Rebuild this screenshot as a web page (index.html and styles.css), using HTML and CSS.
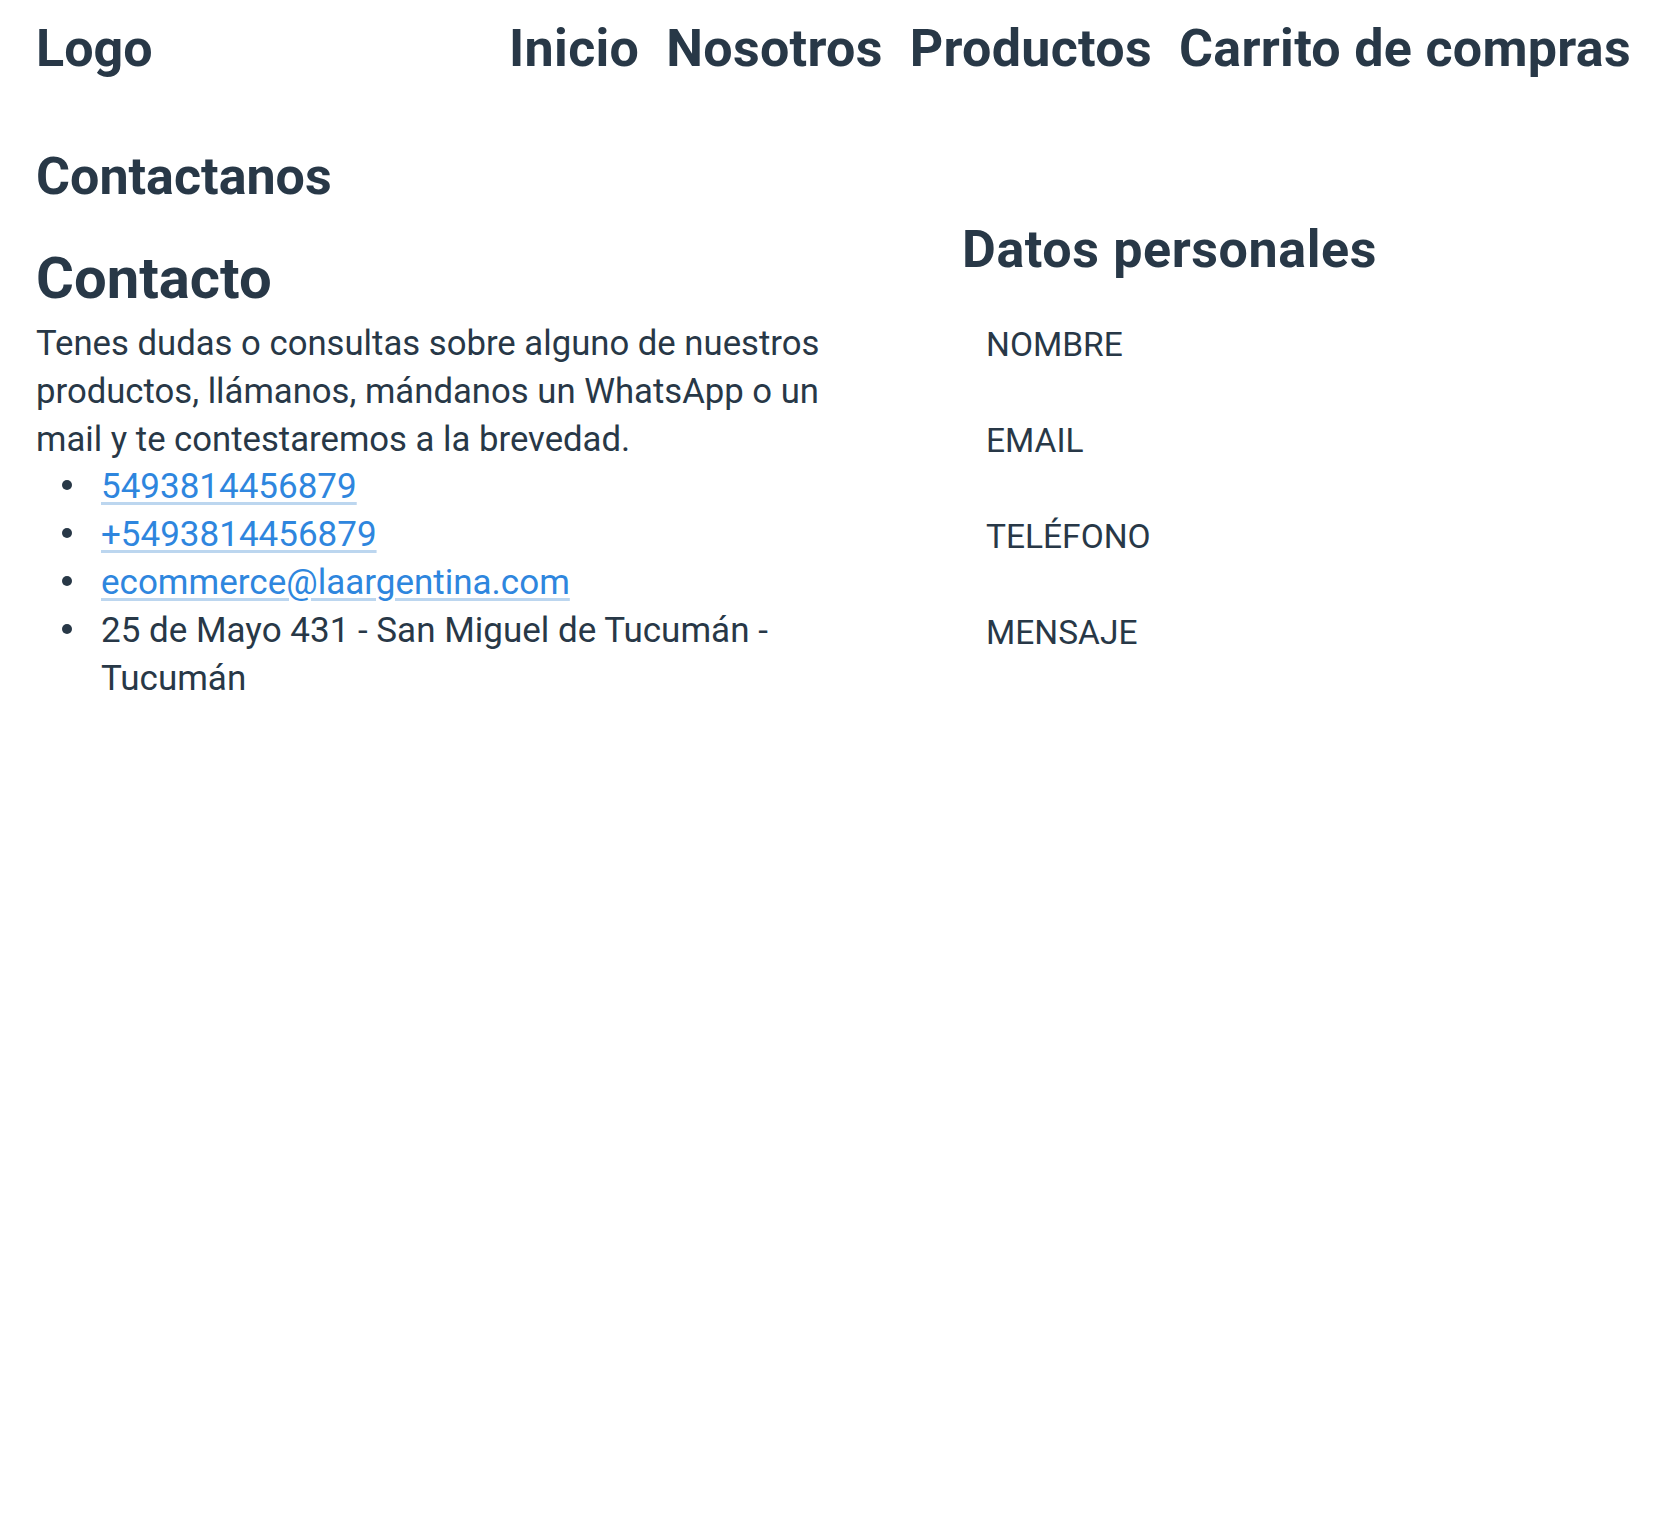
FILE: index.html
```html
<!DOCTYPE html>
<html lang="es">
<head>
<meta charset="utf-8">
<title>Contactanos</title>
<link rel="stylesheet" href="styles.css">
</head>
<body>
<header class="site-header">
  <div class="logo">Logo</div>
  <nav class="nav">
    <a class="nav-link" href="#">Inicio</a>
    <a class="nav-link" href="#">Nosotros</a>
    <a class="nav-link" href="#">Productos</a>
    <a class="nav-link" href="#">Carrito de compras</a>
  </nav>
</header>
<main class="page">
  <h1 class="page-title">Contactanos</h1>
  <div class="contact-grid">
    <section class="info">
      <h2 class="info-title">Contacto</h2>
      <p class="info-text">Tenes dudas o consultas sobre alguno de nuestros productos, llámanos, mándanos un WhatsApp o un mail y te contestaremos a la brevedad.</p>
      <ul class="info-list">
        <li class="info-item"><a class="info-link" href="#">5493814456879</a></li>
        <li class="info-item"><a class="info-link" href="#">+5493814456879</a></li>
        <li class="info-item"><a class="info-link" href="#">ecommerce@laargentina.com</a></li>
        <li class="info-item">25 de Mayo 431 - San Miguel de Tucumán - Tucumán</li>
      </ul>
    </section>
    <form class="form">
      <h3 class="form-title">Datos personales</h3>
      <div class="field"><label class="field-label">NOMBRE</label></div>
      <div class="field"><label class="field-label">EMAIL</label></div>
      <div class="field"><label class="field-label">TELÉFONO</label></div>
      <div class="field"><label class="field-label">MENSAJE</label></div>
    </form>
  </div>
</main>
</body>
</html>
```
FILE: styles.css
```css
* { box-sizing: border-box; }
html, body { margin: 0; padding: 0; background: #ffffff; }
body {
  font-family: Roboto, "Liberation Sans", sans-serif;
  color: #283847;
}
.site-header {
  display: flex;
  justify-content: space-between;
  align-items: baseline;
  padding: 18px 27px 0 36px;
}
.logo, .nav-link {
  font-size: 52px;
  line-height: 62px;
  font-weight: 700;
  color: #283847;
  text-decoration: none;
}
.nav-link { letter-spacing: 0.3px; }
.nav { display: flex; gap: 27px; }
.page { padding: 0 29px 0 36px; }
.page-title {
  margin: 66px 0 0;
  font-size: 52px;
  line-height: 62px;
  font-weight: 700;
}
.contact-grid {
  display: grid;
  grid-template-columns: 802px 1fr;
  column-gap: 124px;
  margin-top: 11px;
}
.info { padding-top: 24px; }
.info-title {
  margin: 0 0 6px;
  font-size: 58px;
  line-height: 70px;
  font-weight: 700;
}
.info-text {
  margin: 0;
  font-size: 34.7px;
  line-height: 48px;
}
.info-list {
  margin: 0;
  padding-left: 65px;
  list-style: none;
  font-size: 35px;
  line-height: 48px;
}
.info-item::before {
  content: "";
  display: inline-block;
  width: 10px;
  height: 10px;
  border-radius: 50%;
  background: #283847;
  margin-left: -39px;
  margin-right: 29px;
  vertical-align: 8px;
}
.info-link {
  color: #2e86de;
  text-decoration: underline;
  text-decoration-color: #bcd6ef;
  text-decoration-thickness: 3px;
  text-underline-offset: 4px;
}
.form { margin: 0; }
.form-title {
  margin: 0 0 40px;
  font-size: 52px;
  line-height: 62px;
  font-weight: 700;
  letter-spacing: 0.6px;
}
.field { padding-left: 24px; height: 96px; }
.field-label {
  display: block;
  font-size: 33.5px;
  line-height: 48px;
}
```
